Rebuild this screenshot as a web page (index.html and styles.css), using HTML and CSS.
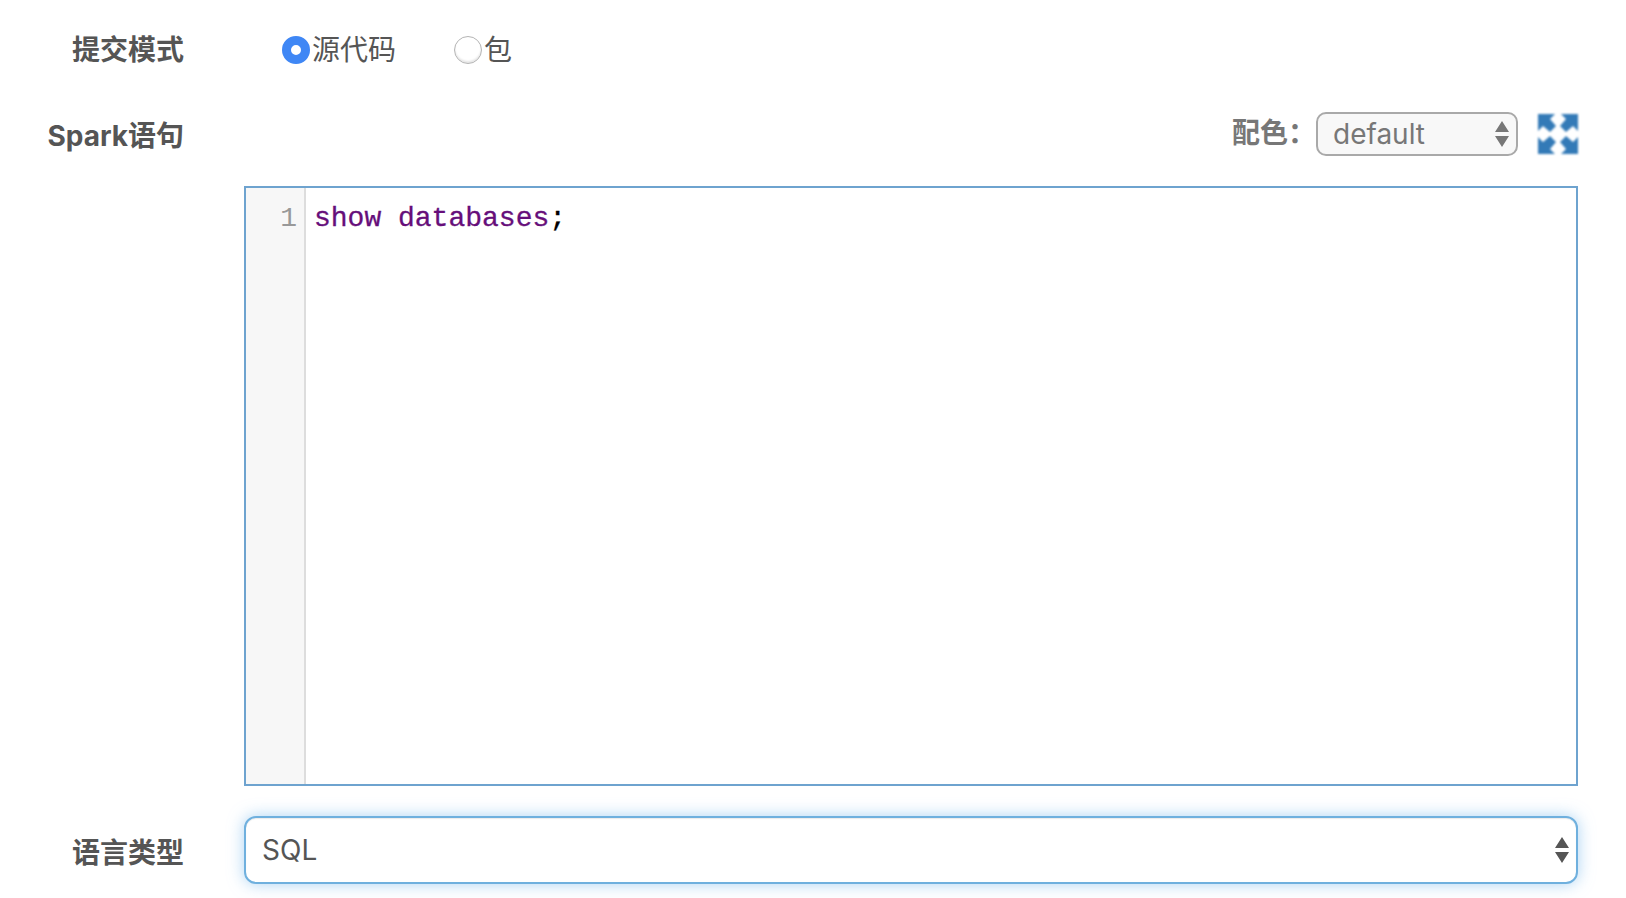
FILE: index.html
```html
<!DOCTYPE html>
<html lang="zh">
<head>
<meta charset="utf-8">
<title>Spark</title>
<link rel="stylesheet" href="styles.css">
</head>
<body>
<form class="form">
  <div class="row row-mode">
    <div class="label">提交模式</div>
    <div class="radios">
      <label class="radio"><span class="dot dot-on"></span>源代码</label>
      <label class="radio"><span class="dot"></span>包</label>
    </div>
  </div>
  <div class="row row-spark">
    <div class="label">Spark语句</div>
    <div class="tools">
      <span class="theme-label">配色：</span>
      <div class="select select-small">
        <span>default</span>
        <svg class="arrows" width="14" height="26" viewBox="0 0 14 26"><path d="M7 0L14 11H0Z M0 15H14L7 26Z"/></svg>
      </div>
      <svg class="expand" width="40" height="40" viewBox="0 0 40 40"><path d="M0 0H17L12 5L18 12L12 18L5 12L0 17Z M40 0V17L35 12L28 18L22 12L28 5L23 0Z M0 40V23L5 28L12 22L18 28L12 35L17 40Z M40 40H23L28 35L22 28L28 22L35 28L40 23Z"/></svg>
    </div>
  </div>
  <div class="row row-editor">
    <div class="label"></div>
    <div class="editor">
      <div class="gutter">1</div>
      <div class="code"><span class="kw">show databases</span>;</div>
    </div>
  </div>
  <div class="row row-lang">
    <div class="label">语言类型</div>
    <div class="select select-large">
      <span>SQL</span>
      <svg class="arrows" width="14" height="26" viewBox="0 0 14 26"><path d="M7 0L14 11H0Z M0 15H14L7 26Z"/></svg>
    </div>
  </div>
</form>
</body>
</html>
```
FILE: styles.css
```css
html, body {
  margin: 0;
  padding: 0;
  height: 100%;
  overflow: hidden;
  background: #fff;
}
body {
  font-family: "Inter", "Noto Sans CJK SC", sans-serif;
  font-size: 28px;
  color: #555;
}
.form {
  display: flex;
  flex-direction: column;
  padding-right: 48px;
}
.row {
  display: flex;
  align-items: center;
}
.label {
  flex: 0 0 184px;
  text-align: right;
  font-weight: 700;
  line-height: 40px;
  white-space: nowrap;
}
.row-mode {
  height: 100px;
}
.radios {
  display: flex;
  margin-left: 98px;
  gap: 58px;
}
.radio {
  display: flex;
  align-items: center;
  gap: 2px;
  line-height: 40px;
}
.dot {
  width: 28px;
  height: 28px;
  box-sizing: border-box;
  border-radius: 50%;
  border: 1px solid #b4b4b4;
  background: #fff;
  box-shadow: inset 0 -2px 2px rgba(0,0,0,.1);
}
.dot-on {
  border: 9px solid #3f87f5;
  box-shadow: none;
}
.row-spark {
  height: 72px;
  justify-content: space-between;
}
.tools {
  display: flex;
  align-items: center;
  gap: 20px;
  margin-bottom: 4px;
}
.theme-label {
  font-weight: 700;
  color: #777;
  margin-right: -20px;
  width: 84px;
  position: relative;
  top: -3px;
}
.select {
  display: flex;
  align-items: center;
  justify-content: space-between;
  box-sizing: border-box;
}
.select-small {
  width: 202px;
  height: 44px;
  padding: 0 7px 0 15px;
  border: 2px solid #a9a9a9;
  border-radius: 10px;
  background: #f8f8f8;
  color: #777;
}
.select-small .arrows {
  fill: #777;
}
.expand {
  fill: #337ab7;
  filter: blur(.9px);
}
.row-editor {
  margin-top: 14px;
}
.editor {
  flex: 1;
  margin-left: 60px;
  height: 600px;
  box-sizing: border-box;
  border: 2px solid #6ea3cf;
  display: flex;
  background: #fff;
}
.gutter {
  flex: 0 0 60px;
  box-sizing: border-box;
  background: #f7f7f7;
  border-right: 2px solid #ddd;
  text-align: right;
  padding: 13px 7px 0 0;
  color: #999;
  font-family: "Liberation Mono", monospace;
  font-size: 28px;
  line-height: 36px;
}
.code {
  padding: 13px 0 0 8px;
  font-family: "Liberation Mono", monospace;
  font-size: 28px;
  line-height: 36px;
  color: #000;
  white-space: pre;
  -webkit-text-stroke: .3px currentColor;
}
.kw {
  color: #660e7a;
}
.row-lang {
  margin-top: 30px;
}
.row-lang .label {
  margin-top: 6px;
}
.select-large {
  flex: 1;
  margin-left: 60px;
  height: 68px;
  padding: 0 7px 0 16px;
  border: 2px solid #6fb0de;
  border-radius: 12px;
  background: #fff;
  box-shadow: 0 0 16px rgba(102,175,233,.55), inset 0 1px 1px rgba(0,0,0,.08);
}
.select-large .arrows {
  fill: #555;
}
```
